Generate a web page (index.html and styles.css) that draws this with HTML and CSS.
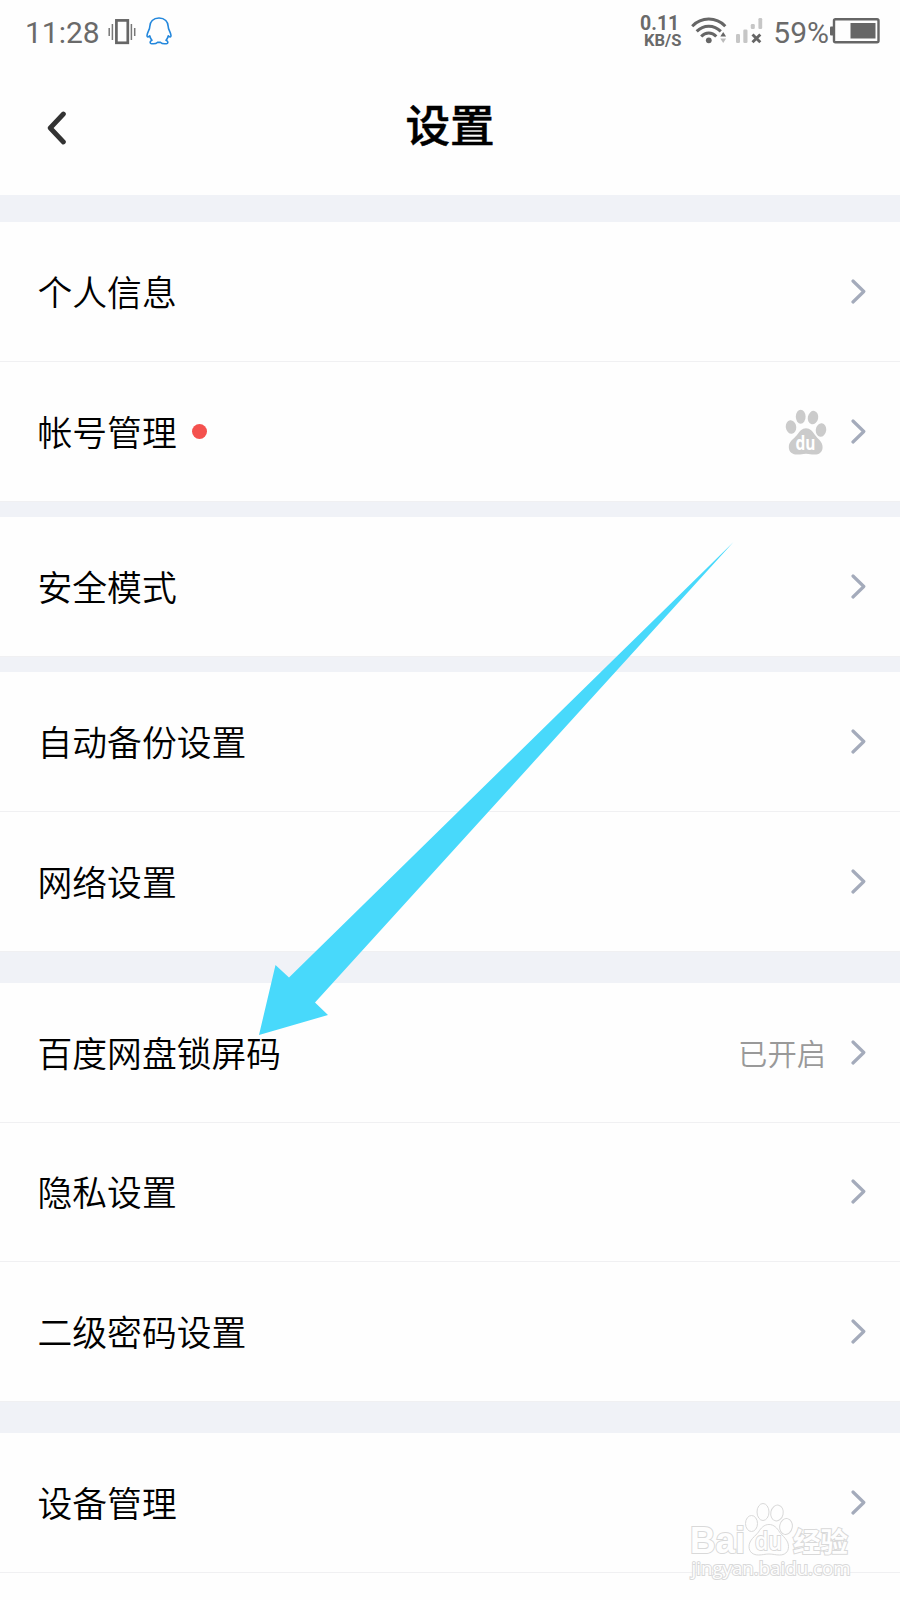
FILE: index.html
```html
<!DOCTYPE html>
<html lang="zh-CN">

<head>
    <meta charset="UTF-8" />
    <meta name="viewport" content="width=device-width, initial-scale=1" />
    <title>设置</title>
    <link rel="stylesheet" href="styles.css">
</head>

<body>
    <!-- Shared icons -->
    <svg class="sprite" aria-hidden="true">
        <symbol id="chevron" viewBox="0 0 15 25">
            <path d="M2 2L12.8 12.5L2 23" fill="none" stroke="currentColor" stroke-width="3.2" stroke-linecap="round" stroke-linejoin="round" />
        </symbol>
    </svg>

    <div class="screen">
        <div class="status-bar">
            <div class="status-left">
                <span class="clock">11:28</span>
                <svg class="icon-vibrate" width="28" height="26" viewBox="0 0 28 26">
                    <rect x="8.4" y="1.4" width="11.4" height="22.4" fill="none" stroke="#666" stroke-width="2.7" />
                    <path d="M1.2 9v8M4.4 5v16M23.4 5v16M26.7 9v8" stroke="#777" stroke-width="1.5" />
                </svg>
                <svg class="icon-qq" width="26" height="28" viewBox="0 0 26 28">
                    <path d="M13 1C7.2 1 3.8 4.8 3.8 9.5C3.9 12.5 1.2 15 1 18.6C1 20.4 1.8 20.5 3.7 18.8C4.2 21 4.8 22 6 23.2C3.8 24 3.4 26.5 5.8 26.7C8.6 27 10.4 26.6 11.4 25.4H14.6C15.6 26.6 17.4 27 20.2 26.7C22.6 26.5 22.2 24 20 23.2C21.2 22 21.8 21 22.3 18.8C24.2 20.5 25 20.4 25 18.6C24.8 15 22.1 12.5 22.2 9.5C22.2 4.8 18.8 1 13 1Z" fill="none" stroke="#2387dc" stroke-width="1.6" stroke-linejoin="round" />
                </svg>
            </div>
            <div class="status-right">
                <div class="net-speed">
                    <span class="speed-value">0.11</span>
                    <span class="speed-unit">KB/S</span>
                </div>
                <svg class="icon-wifi" width="37" height="28" viewBox="0 0 37 28">
                    <g fill="none" stroke="#666" stroke-width="3">
                        <path d="M1.2 9.2C10.5 -.3 25 -.3 34.3 9.2" />
                        <path d="M5.7 14.4C12.5 7.4 23 7.4 29.8 14.4" />
                        <path d="M10.2 19.4C14.5 14.8 21 14.8 25.3 19.4" />
                    </g>
                    <circle cx="17.8" cy="23.3" r="2.9" fill="#666" />
                    <path d="M29.3 19.5L32.2 15L35.1 19.5Z" fill="#666" />
                    <path d="M29.3 21.4H35.1L32.2 26Z" fill="#bbb" />
                </svg>
                <svg class="icon-signal" width="29" height="26" viewBox="0 0 29 26">
                    <g fill="#c6c6c6">
                        <rect x="1" y="16" width="4" height="9" rx="1.3" />
                        <rect x="8.3" y="11.5" width="4.2" height="13.5" rx="1.3" />
                        <rect x="15.8" y="6" width="4" height="5" rx="1.3" />
                        <rect x="23.4" y="0" width="3.8" height="11" rx="1.3" />
                    </g>
                    <path d="M17.5 16.5L25.3 24.3M25.3 16.5L17.5 24.3" stroke="#666" stroke-width="2.9" />
                </svg>
                <span class="battery-level">59%</span>
                <svg class="icon-battery" width="50" height="26" viewBox="0 0 50 26">
                    <rect x="0" y="8.5" width="4" height="9" rx="1" fill="#666" />
                    <rect x="4" y="1.3" width="44.5" height="23" rx="1.5" fill="none" stroke="#666" stroke-width="2.4" />
                    <rect x="20.5" y="5" width="25" height="15.5" fill="#666" />
                </svg>
            </div>
        </div>

        <header class="nav-bar">
            <button class="back" type="button" aria-label="返回">
                <svg width="20" height="34" viewBox="0 0 20 34">
                    <path d="M16.4 3L3.2 17L16.4 31" fill="none" stroke="#333" stroke-width="4.8" stroke-linecap="round" stroke-linejoin="round" />
                </svg>
            </button>
            <h1>设置</h1>
        </header>

        <main class="settings">
            <section class="group">
                <div class="row">
                    <span class="label">个人信息</span>
                    <svg class="chevron"><use href="#chevron" /></svg>
                </div>
                <div class="row">
                    <span class="label">帐号管理</span>
                    <span class="dot"></span>
                    <svg class="paw" width="42" height="46" viewBox="0 0 42 46">
                        <g fill="#cbcbcb">
                            <ellipse cx="6" cy="18" rx="5.2" ry="6.8" transform="rotate(-8 6 18)" />
                            <ellipse cx="15.7" cy="7.8" rx="4.9" ry="7" />
                            <ellipse cx="28" cy="8.6" rx="5.2" ry="6.8" transform="rotate(12 28 8.6)" />
                            <ellipse cx="36" cy="21" rx="5.2" ry="6.8" transform="rotate(8 36 21)" />
                            <path d="M21 19.3C25 19.3 27.7 22.5 30 26C32.5 29.6 37.6 32.6 37.6 38C37.6 43.5 34 45.6 29.5 45.6C26 45.6 24.5 44.7 21 44.7C17.5 44.7 16 45.6 12.5 45.6C7.5 45.6 3.8 43.2 3.8 38C3.8 32.6 9 29.6 12 26C14.5 22.5 17 19.3 21 19.3Z" />
                        </g>
                        <text class="paw-text" x="10.5" y="40.6" textLength="20" lengthAdjust="spacingAndGlyphs">du</text>
                    </svg>
                    <svg class="chevron"><use href="#chevron" /></svg>
                </div>
            </section>

            <section class="group">
                <div class="row">
                    <span class="label">安全模式</span>
                    <svg class="chevron"><use href="#chevron" /></svg>
                </div>
            </section>

            <section class="group">
                <div class="row">
                    <span class="label">自动备份设置</span>
                    <svg class="chevron"><use href="#chevron" /></svg>
                </div>
                <div class="row">
                    <span class="label">网络设置</span>
                    <svg class="chevron"><use href="#chevron" /></svg>
                </div>
            </section>

            <section class="group group-wide">
                <div class="row">
                    <span class="label">百度网盘锁屏码</span>
                    <span class="value">已开启</span>
                    <svg class="chevron"><use href="#chevron" /></svg>
                </div>
                <div class="row">
                    <span class="label">隐私设置</span>
                    <svg class="chevron"><use href="#chevron" /></svg>
                </div>
                <div class="row">
                    <span class="label">二级密码设置</span>
                    <svg class="chevron"><use href="#chevron" /></svg>
                </div>
            </section>

            <section class="group group-wide group-last">
                <div class="row">
                    <span class="label">设备管理</span>
                    <svg class="chevron"><use href="#chevron" /></svg>
                </div>
            </section>
        </main>

        <!-- Pointer laid over the list -->
        <svg class="pointer" width="475" height="494" viewBox="0 0 475 494">
            <path d="M474.5 0L30 435.5L16.5 423L0 493L69 473L56 460.5Z" fill="#48d9fb" />
        </svg>

        <svg class="watermark" width="170" height="90" viewBox="0 0 170 90">
            <g fill="#fefefe" stroke="#d9d9d9" stroke-width="1">
                <text class="wm-bai" x="4" y="53" textLength="55" lengthAdjust="spacingAndGlyphs">Bai</text>
                <ellipse cx="65.5" cy="23.5" rx="6" ry="8" />
                <ellipse cx="77" cy="12" rx="6" ry="8.5" />
                <ellipse cx="91" cy="13" rx="6.2" ry="8" transform="rotate(12 91 13)" />
                <ellipse cx="100" cy="26.5" rx="6.3" ry="8" transform="rotate(10 100 26.5)" />
                <path d="M83 24.5C88 24.5 91 28 93.5 32C96.5 36 102.5 40 102.5 46.5C102.5 52.5 98.5 55 93.5 55C89.5 55 87 54 83 54C79 54 76.5 55 72.5 55C67.5 55 63 52.5 63 46.5C63 40 69.5 36 72.5 32C75 28 78 24.5 83 24.5Z" />
                <text class="wm-du" x="69" y="49.5" textLength="27" lengthAdjust="spacingAndGlyphs">du</text>
                <text class="wm-cn" x="107" y="51.5">经验</text>
                <text class="wm-url" x="5.5" y="75" textLength="159" lengthAdjust="spacingAndGlyphs">jingyan.baidu.com</text>
            </g>
        </svg>
    </div>
</body>

</html>
```
FILE: styles.css
```css
* {
    margin: 0;
    padding: 0;
    box-sizing: border-box;
}

body {
    font-family: 'Noto Sans CJK SC', sans-serif;
    background: #fefefe;
    color: #0a0a0a;
}

.sprite {
    display: none;
}

.screen {
    width: 900px;
    height: 1600px;
    position: relative;
    overflow: hidden;
}

.status-bar {
    height: 64px;
    padding: 0 20px 0 25px;
    display: flex;
    justify-content: space-between;
    align-items: center;
    font-family: Roboto, sans-serif;
    color: #6a6a6a;
}

.status-left,
.status-right {
    display: flex;
    align-items: center;
}

.clock,
.battery-level {
    font-size: 30px;
    line-height: 36px;
    padding-top: 2px;
}

.battery-level {
    margin-right: 1px;
}

.icon-vibrate {
    margin-left: 8px;
}

.icon-qq {
    margin: 0 0 2px 10px;
}

.net-speed {
    display: flex;
    flex-direction: column;
    align-items: flex-end;
    font-weight: 700;
    margin-right: 10px;
}

.speed-value {
    font-size: 19.5px;
    line-height: 18px;
    padding-right: 2px;
}

.speed-unit {
    font-size: 16.5px;
    line-height: 16px;
}

.icon-wifi {
    margin-right: 7px;
    margin-bottom: 3px;
}

.icon-signal {
    margin-right: 9px;
    margin-bottom: 2px;
}

.icon-battery {
    margin-bottom: 2px;
}

.nav-bar {
    height: 131px;
    padding-bottom: 10px;
    display: grid;
    grid-template-columns: 100px 1fr 100px;
    align-items: center;
}

.back {
    border: none;
    background: none;
    height: 34px;
    padding-left: 47px;
    text-align: left;
    margin-top: 6px;
}

h1 {
    font-size: 44.6px;
    font-weight: 500;
    line-height: 60px;
    text-align: center;
    color: #000;
    -webkit-text-stroke: 0.5px #000;
    margin-top: -4px;
}

.settings {
    background: #f0f2f7;
    padding-top: 27.3px;
}

.group {
    background: #fefefe;
    margin-bottom: 15.4px;
}

.group:has(+ .group-wide) {
    margin-bottom: 31px;
}

.group-last {
    height: 180px;
    margin-bottom: 0;
}

.row {
    height: 139.75px;
    padding: 0 34px 0 37.5px;
    display: flex;
    align-items: center;
    border-bottom: 1px solid #f0f0f2;
}

.label {
    font-size: 34.8px;
    line-height: 50px;
    font-weight: 350;
    color: #000;
    margin: 0 auto 1px 0;
}

.label:has(+ .dot) {
    margin-right: 0;
}

.dot {
    width: 15px;
    height: 15px;
    border-radius: 50%;
    background: #f4514e;
    margin-left: 15px;
    margin-right: auto;
}

.paw {
    margin-top: 1px;
    margin-right: 24px;
}

.paw-text {
    font: 700 20px 'Open Sans', sans-serif;
    fill: #fff;
}

.value {
    font-size: 29.3px;
    line-height: 44px;
    font-weight: 350;
    color: #999;
    margin-right: 25px;
}

.chevron {
    width: 15px;
    height: 25px;
    color: #a4abbb;
}

.pointer {
    position: absolute;
    left: 259px;
    top: 542px;
}

.watermark {
    position: absolute;
    left: 686px;
    top: 1500px;
}

/* Outline is painted first so that the letters stay hollow */
.watermark text {
    paint-order: stroke;
    stroke-width: 2;
}

.wm-bai {
    font: 700 37px 'Liberation Sans', sans-serif;
}

.wm-du {
    font: 600 25px 'Open Sans', sans-serif;
}

.wm-cn {
    font: 700 27.5px 'Noto Sans CJK SC', sans-serif;
}

.wm-url {
    font: 400 19px 'Open Sans', sans-serif;
}
```
